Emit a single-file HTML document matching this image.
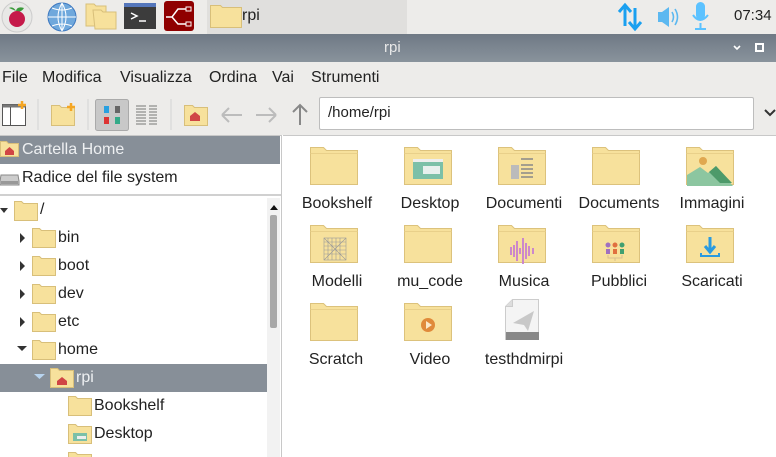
<!DOCTYPE html>
<html><head><meta charset="utf-8"><style>
*{margin:0;padding:0;box-sizing:border-box}
body{width:776px;height:457px;overflow:hidden;background:#fff;font-family:"Liberation Sans",sans-serif;position:relative;color:#222}
.a{position:absolute}
.t{font-size:16px;white-space:nowrap}
</style></head><body>
<svg width="0" height="0" style="position:absolute"><defs>
<symbol id="f" viewBox="0 0 48 40"><path d="M0.5 1.5h13l3 3h31v34h-47z" fill="#f7e19c" stroke="#dcc27c"/><path d="M0.5 7.5h47" stroke="#e9d08a"/></symbol>
<symbol id="sf" viewBox="0 0 24 20"><path d="M0.5 0.5h7l2 2h14v17h-23z" fill="#f7e19c" stroke="#d8bf7a"/></symbol>
</defs></svg>

<div class="a" style="left:0;top:0;width:776px;height:34px;background:#edecea"></div>
<div class="a" style="left:207px;top:0;width:200px;height:34px;background:#e0dfdd"></div>
<svg class="a" style="left:0;top:0" width="200" height="34">
<circle cx="17" cy="17" r="15" fill="#e8e8e6" stroke="#ccc"/>
<path d="M9 8 q4 -2 7 3 q1 -5 8 -3 q-3 5 -8 3z" fill="#3a9a3a"/>
<circle cx="17" cy="19" r="8" fill="#c51a4a"/>
<circle cx="62" cy="17" r="14" fill="#6fa8dc" stroke="#3d78c0"/>
<path d="M48 17h28M62 3v28M52 8q10 4 20 0M52 26q10 -4 20 0M62 3q-8 14 0 28M62 3q8 14 0 28" stroke="#fff" fill="none" stroke-width="1"/>
<path d="M86 4h8l2 2h10v20h-20z" fill="#f7e19c" stroke="#d8bf7a"/>
<path d="M93 10h8l2 2h13v17h-21z" fill="#f7e19c" stroke="#d8bf7a"/>
<rect x="124" y="3" width="32" height="26" fill="#3c3c3c"/><rect x="124" y="3" width="32" height="4" fill="#5577bb"/>
<path d="M131 13l6 3-6 3M139 21h7" stroke="#fff" fill="none" stroke-width="1.5"/>
<rect x="164" y="1" width="30" height="30" rx="3" fill="#8f0000"/>
<path d="M166 17h6l6 -8h8M172 17l6 7h8" stroke="#fff" fill="none" stroke-width="1.5"/>
<rect x="186" y="7" width="5" height="4" fill="none" stroke="#fff"/><rect x="186" y="22" width="5" height="4" fill="none" stroke="#fff"/>
</svg>
<svg class="a" style="left:210;top:4px" width="32" height="24"><path d="M0.5 1.5h10l2 2h19v20h-31z" fill="#f7e19c" stroke="#d8bf7a"/></svg>
<div class="a t" style="left:242px;top:7px">rpi</div>
<svg class="a" style="left:608px;top:0" width="120" height="34">
<path d="M17 26V6M11 12l6-7 6 7M27 8v20M21 22l6 7 6-7" stroke="#1aa0f0" stroke-width="3" fill="none"/>
<path d="M50 12h4l7-5v20l-7-5h-4z" fill="#5cb8f0"/><path d="M64 12q3 5 0 10M67 9q5 8 0 16" stroke="#5cb8f0" stroke-width="1.6" fill="none"/>
<rect x="88" y="2" width="9" height="18" rx="4.5" fill="#5cc2ff"/><path d="M85 15q7 10 15 0M92.5 23v6M87 29h11" stroke="#5cc2ff" stroke-width="2" fill="none"/>
</svg>
<div class="a t" style="left:734px;top:7px;font-size:15px">07:34</div>

<div class="a" style="left:0;top:34px;width:776px;height:28px;background:linear-gradient(#6f7985,#89939c)"></div>
<div class="a t" style="left:384px;top:39px;color:#e8e8e8;font-size:15px">rpi</div>
<svg class="a" style="left:730px;top:40px" width="40" height="16"><path d="M4 6l3 3 3-3" stroke="#fff" stroke-width="1.6" fill="none"/><rect x="26" y="4" width="7" height="7" fill="none" stroke="#fff" stroke-width="2"/></svg>

<div class="a" style="left:0;top:62px;width:776px;height:73px;background:#edecea"></div>
<div class="a t" style="left:2px;top:69px">File</div>
<div class="a t" style="left:42px;top:69px">Modifica</div>
<div class="a t" style="left:120px;top:69px">Visualizza</div>
<div class="a t" style="left:209px;top:69px">Ordina</div>
<div class="a t" style="left:272px;top:69px">Vai</div>
<div class="a t" style="left:311px;top:69px">Strumenti</div>

<svg class="a" style="left:0;top:92px" width="320" height="42">
<rect x="2.5" y="12.5" width="23" height="21" fill="#fff" stroke="#555"/><rect x="2.5" y="12.5" width="23" height="3" fill="#777"/><path d="M10.5 15v19" stroke="#555"/><path d="M22 9v8M18 13h8" stroke="#f5a623" stroke-width="2.5"/>
<path d="M38 7v31M88 7v31M171 7v31" stroke="#d4d4d4"/>
<path d="M51.5 13.5h8l2 2h13v18h-23z" fill="#f7e19c" stroke="#d8bf7a"/><path d="M71 11v8M67 15h8" stroke="#f5a623" stroke-width="2.5"/>
<rect x="95.5" y="7.5" width="33" height="31" rx="2" fill="#c8c8c8" stroke="#aaa"/>
<rect x="104" y="14" width="5" height="7" fill="#29a0e0"/><rect x="115" y="14" width="5" height="7" fill="#666"/><rect x="104" y="25" width="5" height="7" fill="#d33"/><rect x="115" y="25" width="5" height="7" fill="#3a8"/>
<path d="M136 14h10M136 17h10M136 20h10M136 23h10M136 26h10M136 29h10M136 32h10M149 14h8M149 17h8M149 20h8M149 23h8M149 26h8M149 29h8M149 32h8" stroke="#777"/>
<path d="M184.5 13.5h8l2 2h13v18h-23z" fill="#f7e19c" stroke="#d8bf7a"/><path d="M190 24l5-4 5 4v5h-10z" fill="#d04545"/>
<path d="M222 23h20M222 23l7-7M222 23l7 7M256 23h20M276 23l-7-7M276 23l-7 7" stroke="#bcbcbc" stroke-width="2" fill="none"/>
<path d="M300 33V13M293 20l7-7 7 7" stroke="#888" stroke-width="2" fill="none"/>
</svg>
<div class="a" style="left:319px;top:97px;width:435px;height:33px;background:#fff;border:1px solid #bdbdbd;border-radius:2px"></div>
<div class="a t" style="left:328px;top:104px;font-size:15px">/home/rpi</div>
<svg class="a" style="left:764px;top:108px" width="12" height="10"><path d="M1 2l5 5 5-5" stroke="#333" stroke-width="2" fill="none"/></svg>

<div class="a" style="left:0;top:135px;width:282px;height:322px;background:#fff;border-right:1px solid #c8c8c8"></div>
<div class="a" style="left:0;top:135px;width:281px;height:1px;background:#c8c8c8"></div>
<div class="a" style="left:0;top:136px;width:280px;height:28px;background:#878f98"></div>
<svg class="a" style="left:0;top:140px" width="20" height="18"><path d="M0.5 1.5h6l2 2h10v13h-18z" fill="#f7e19c" stroke="#d8bf7a"/><path d="M5 11l4.5-4 4.5 4v4h-9z" fill="#d04545"/></svg>
<div class="a t" style="left:22px;top:141px;color:#eef0f2">Cartella Home</div>
<svg class="a" style="left:0;top:170px" width="20" height="16"><path d="M1 5h17l1 6v4h-19v-4z" fill="#ccc" stroke="#888"/><rect x="1" y="11" width="17" height="3" fill="#999"/></svg>
<div class="a t" style="left:22px;top:169px">Radice del file system</div>
<div class="a" style="left:0;top:194px;width:281px;height:2px;background:#d0d0d0"></div>
<div class="a" style="left:0;top:364px;width:267px;height:28px;background:#878f98"></div>
<div class="a" style="left:267px;top:198px;width:13px;height:259px;background:#f2f2f2"></div>
<svg class="a" style="left:269px;top:204px" width="10" height="8"><path d="M1 6l4-5 4 5z" fill="#111"/></svg>
<div class="a" style="left:270px;top:215px;width:7px;height:113px;background:#a8a8a8;border-radius:2px"></div>

<svg class="a" style="left:0;top:198px" width="267" height="259">
<path d="M0 10l8 0-4 5z" fill="#333"/>
<use href="#sf" x="14" y="3" width="24" height="20"/>
<path d="M20 35l5 5-5 5z M20 63l5 5-5 5z M20 91l5 5-5 5z M20 119l5 5-5 5z" fill="#333"/>
<use href="#sf" x="32" y="30" width="24" height="20"/>
<use href="#sf" x="32" y="58" width="24" height="20"/>
<use href="#sf" x="32" y="86" width="24" height="20"/>
<use href="#sf" x="32" y="114" width="24" height="20"/>
<path d="M17 148h10l-5 5z" fill="#333"/>
<use href="#sf" x="32" y="142" width="24" height="20"/>
<path d="M34 176h11l-5.5 5z" fill="#b8d4ef"/>
<use href="#sf" x="50" y="170" width="24" height="20"/>
<path d="M57 183l5-4 5 4v4h-10z" fill="#d04545"/>
<use href="#sf" x="68" y="198" width="24" height="20"/>
<use href="#sf" x="68" y="226" width="24" height="20"/>
<rect x="73" y="235" width="14" height="8" fill="#7cc0a8"/><rect x="77" y="238" width="9" height="3" fill="#eee"/>
<use href="#sf" x="68" y="254" width="24" height="20"/>
</svg>
<div class="a t" style="left:40px;top:201px">/</div>
<div class="a t" style="left:58px;top:229px">bin</div>
<div class="a t" style="left:58px;top:257px">boot</div>
<div class="a t" style="left:58px;top:285px">dev</div>
<div class="a t" style="left:58px;top:313px">etc</div>
<div class="a t" style="left:58px;top:341px">home</div>
<div class="a t" style="left:76px;top:369px;color:#eef0f2">rpi</div>
<div class="a t" style="left:94px;top:397px">Bookshelf</div>
<div class="a t" style="left:94px;top:425px">Desktop</div>

<div class="a" style="left:283px;top:135px;width:493px;height:1px;background:#c8c8c8"></div>
<svg class="a" style="left:290px;top:135px" width="486" height="240">
<g><use href="#f" x="20" y="11" width="48" height="40"/><use href="#f" x="114" y="11" width="48" height="40"/><use href="#f" x="208" y="11" width="48" height="40"/><use href="#f" x="302" y="11" width="48" height="40"/><use href="#f" x="396" y="11" width="48" height="40"/>
<use href="#f" x="20" y="89" width="48" height="40"/><use href="#f" x="114" y="89" width="48" height="40"/><use href="#f" x="208" y="89" width="48" height="40"/><use href="#f" x="302" y="89" width="48" height="40"/><use href="#f" x="396" y="89" width="48" height="40"/>
<use href="#f" x="20" y="167" width="48" height="40"/><use href="#f" x="114" y="167" width="48" height="40"/></g>
<rect x="123" y="24" width="30" height="20" fill="#7cc0a8"/><rect x="123" y="24" width="30" height="3" fill="#eee"/><rect x="133" y="31" width="17" height="8" fill="#e8f0ee"/>
<rect x="221" y="30" width="8" height="14" fill="#bbb"/><path d="M231 24h12M231 30h12M231 34h12M231 38h12M231 42h12" stroke="#888" stroke-width="1.5"/>
<path d="M397 51V40l13-8 8 6 8-7 17 20z" fill="#8cc6a0"/><path d="M419 37l7-6 16 17h-12z" fill="#4d9a6a"/><circle cx="413" cy="26" r="4" fill="#e0a850"/>
<g stroke="#999" stroke-width="0.6" fill="none"><rect x="34" y="103" width="22" height="22"/><path d="M34 107h22M34 111h22M34 115h22M34 119h22M38 103v22M42 103v22M46 103v22M50 103v22M34 103l22 22M56 103l-22 22"/></g>
<g stroke="#c77fd0" stroke-width="1.8"><path d="M221 112v8M224 110v12M227 106v20M230 113v6M233 103v26M236 108v16M239 111v10M243 113v6"/></g>
<circle cx="318" cy="110" r="2.5" fill="#a070c0"/><circle cx="325" cy="110" r="2.5" fill="#e07040"/><circle cx="332" cy="110" r="2.5" fill="#40a070"/>
<rect x="316" y="114" width="4" height="5" fill="#a070c0"/><rect x="323" y="114" width="4" height="5" fill="#e07040"/><rect x="330" y="114" width="4" height="5" fill="#40a070"/>
<path d="M318 120v3h14v-3M325 123v3" stroke="#d8c090" fill="none"/>
<path d="M420 102v14M415 111l5 6 5-6" stroke="#2a9be0" stroke-width="3" fill="none"/><path d="M411 118v3h18v-3" stroke="#2a9be0" stroke-width="2" fill="none"/>
<circle cx="138" cy="190" r="7" fill="#e08a3a"/><path d="M136 186v8l6-4z" fill="#fbe9c9"/>
<path d="M222.5 164.5h26v40h-33v-33z" fill="#f4f4f4" stroke="#ccc"/><path d="M222.5 164.5v7h-7" fill="#ddd" stroke="#ccc"/>
<rect x="216" y="197" width="33" height="8" fill="#888"/>
<path d="M223 188l21-12-6 20-4-6z" fill="#c8c8c8"/>
</svg>
<div class="a t" style="left:290px;top:195px;width:94px;text-align:center">Bookshelf</div>
<div class="a t" style="left:383px;top:195px;width:94px;text-align:center">Desktop</div>
<div class="a t" style="left:477px;top:195px;width:94px;text-align:center">Documenti</div>
<div class="a t" style="left:572px;top:195px;width:94px;text-align:center">Documents</div>
<div class="a t" style="left:665px;top:195px;width:94px;text-align:center">Immagini</div>
<div class="a t" style="left:290px;top:273px;width:94px;text-align:center">Modelli</div>
<div class="a t" style="left:383px;top:273px;width:94px;text-align:center">mu_code</div>
<div class="a t" style="left:477px;top:273px;width:94px;text-align:center">Musica</div>
<div class="a t" style="left:572px;top:273px;width:94px;text-align:center">Pubblici</div>
<div class="a t" style="left:665px;top:273px;width:94px;text-align:center">Scaricati</div>
<div class="a t" style="left:289px;top:351px;width:94px;text-align:center">Scratch</div>
<div class="a t" style="left:383px;top:351px;width:94px;text-align:center">Video</div>
<div class="a t" style="left:477px;top:351px;width:94px;text-align:center">testhdmirpi</div>
</body></html>
